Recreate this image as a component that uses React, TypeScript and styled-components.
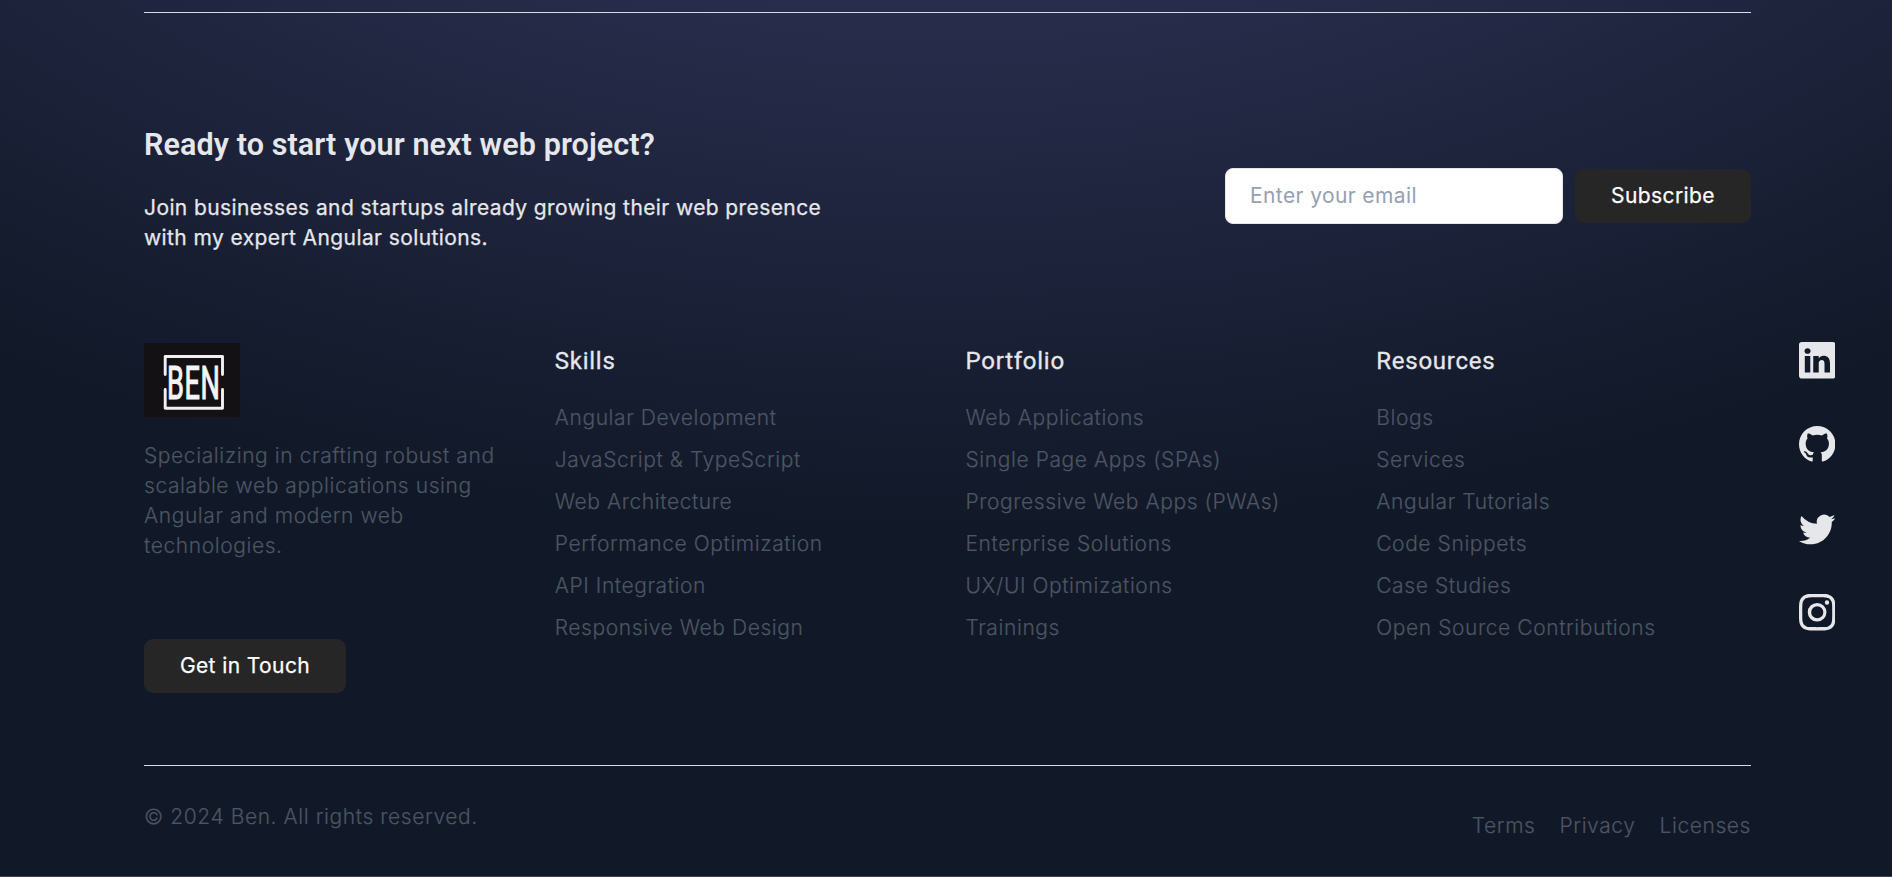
import React from "react";
import styled, { createGlobalStyle } from "styled-components";
import { BsLinkedin, BsGithub, BsTwitter, BsInstagram } from "react-icons/bs";

const GlobalStyle = createGlobalStyle`
  *, *::before, *::after { box-sizing: border-box; }
  html { font-size: 18px; }
  body {
    margin: 0;
    font-family: Inter, "Liberation Sans", sans-serif;
    font-size: 21px;
    line-height: 30px;
    letter-spacing: 0.4px;
    color: #e5e7eb;
    background: #111827;
    overflow: hidden;
  }
  h2, h3, p, ul { margin: 0; padding: 0; }
  ul { list-style: none; }
`;

const Page = styled.footer`
  height: 877px;
  padding: 12px 57px 0 144px;
  background: radial-gradient(ellipse 1646px 935px at 50% -400px, #3a3d69 0%, #111827 100%);
  border-bottom: 1px solid #3b4552;
`;

const Divider = styled.div`
  width: 1607px;
  height: 1px;
  background: #d9dbe4;
`;

const Newsletter = styled.section`
  width: 1607px;
  padding-top: 110px;
  display: flex;
  justify-content: space-between;
`;

const Pitch = styled.div`
  width: 690px;
`;

const PitchTitle = styled.h2`
  font: 600 30.5px/44px Roboto, sans-serif;
  letter-spacing: 0.1px;
`;

const PitchText = styled.p`
  margin-top: 26px;
  font-weight: 400;
  -webkit-text-stroke: 0.25px currentColor;
`;

const SubscribeForm = styled.form`
  display: flex;
  align-items: center;
  gap: 12px;
  height: 56px;
  margin-top: 45px;
`;

const EmailInput = styled.input`
  width: 338px;
  height: 56px;
  padding: 0 24px 1px;
  border: 1px solid #e5e7eb;
  border-radius: 8px;
  background: #fff;
  font: 400 21px/30px Inter, sans-serif;
  letter-spacing: 0.4px;
  &::placeholder { color: #94a0b3; opacity: 1; }
`;

const Button = styled.button<{ $width: number }>`
  width: ${(p) => p.$width}px;
  height: 54px;
  padding: 0;
  border: 0;
  border-radius: 9px;
  background: #262626;
  color: #fff;
  font: 400 21px/30px Inter, sans-serif;
  letter-spacing: 0.4px;
  -webkit-text-stroke: 0.25px currentColor;
`;

const Main = styled.section`
  display: flex;
  justify-content: space-between;
  height: 422px;
  margin-top: 90px;
`;

const Columns = styled.div`
  width: 1607px;
  display: grid;
  grid-template-columns: repeat(4, 1fr);
  gap: 36px;
  align-items: start;
`;

const Logo = styled.svg`
  display: block;
  width: 96px;
  height: 74px;
`;

const About = styled.p`
  margin: 24px 0 78px;
  font-weight: 300;
  letter-spacing: 0.58px;
  color: #4b5563;
  -webkit-text-stroke: 0.2px currentColor;
`;

const ColumnTitle = styled.h3`
  font: 400 24px/36px Roboto, sans-serif;
  letter-spacing: 0.75px;
  -webkit-text-stroke: 0.3px currentColor;
`;

const LinkList = styled.ul`
  margin-top: 24px;
  display: flex;
  flex-direction: column;
  gap: 12px;
  font-weight: 300;
  letter-spacing: 0.58px;
  color: #4b5563;
  -webkit-text-stroke: 0.2px currentColor;
  white-space: nowrap;
`;

const Socials = styled.div`
  display: flex;
  flex-direction: column;
  gap: 47.5px;
  margin-top: -1px;
  svg { display: block; width: 36.5px; height: 36.5px; }
`;

const Legal = styled.section`
  width: 1607px;
  display: flex;
  justify-content: space-between;
  padding-top: 36px;
  font-weight: 300;
  letter-spacing: 0.58px;
  color: #4b5563;
  -webkit-text-stroke: 0.2px currentColor;
`;

const LegalLinks = styled.div`
  display: flex;
  gap: 24px;
  padding-top: 9px;
`;

const columns = [
  {
    title: "Skills",
    links: ["Angular Development", "JavaScript & TypeScript", "Web Architecture", "Performance Optimization", "API Integration", "Responsive Web Design"],
  },
  {
    title: "Portfolio",
    links: ["Web Applications", "Single Page Apps (SPAs)", "Progressive Web Apps (PWAs)", "Enterprise Solutions", "UX/UI Optimizations", "Trainings"],
  },
  {
    title: "Resources",
    links: ["Blogs", "Services", "Angular Tutorials", "Code Snippets", "Case Studies", "Open Source Contributions"],
  },
];

export default function App() {
  return (
    <>
      <GlobalStyle />
      <Page>
        <Divider />
        <Newsletter>
          <Pitch>
            <PitchTitle>Ready to start your next web project?</PitchTitle>
            <PitchText>
              Join businesses and startups already growing their web presence with my expert Angular solutions.
            </PitchText>
          </Pitch>
          <SubscribeForm>
            <EmailInput placeholder="Enter your email" />
            <Button type="button" $width={176}>Subscribe</Button>
          </SubscribeForm>
        </Newsletter>
        <Main>
          <Columns>
            <div>
              <Logo viewBox="0 0 96 74">
                <rect width="96" height="74" fill="#131113" />
                <path d="M21.2 31.5V13.5H78.5V31.5M21.2 46.5V65.2H78.5V46.5" fill="none" stroke="#f1f1f1" strokeWidth="2.9" strokeLinecap="round" strokeLinejoin="round" />
                <text transform="translate(23 56) scale(.59 1)" fontFamily="Roboto" fontWeight="400" fontSize="46" letterSpacing="1" fill="#f4f4f4" stroke="#f4f4f4" strokeWidth="1.2">BEN</text>
              </Logo>
              <About>Specializing in crafting robust and scalable web applications using Angular and modern web technologies.</About>
              <Button type="button" $width={202}>Get in Touch</Button>
            </div>
            {columns.map((column) => (
              <div key={column.title}>
                <ColumnTitle>{column.title}</ColumnTitle>
                <LinkList>
                  {column.links.map((link) => (
                    <li key={link}>{link}</li>
                  ))}
                </LinkList>
              </div>
            ))}
          </Columns>
          <Socials>
            <BsLinkedin />
            <BsGithub />
            <BsTwitter />
            <BsInstagram />
          </Socials>
        </Main>
        <Divider />
        <Legal>
          <span>© 2024 Ben. All rights reserved.</span>
          <LegalLinks>
            <span>Terms</span>
            <span>Privacy</span>
            <span>Licenses</span>
          </LegalLinks>
        </Legal>
      </Page>
    </>
  );
}
